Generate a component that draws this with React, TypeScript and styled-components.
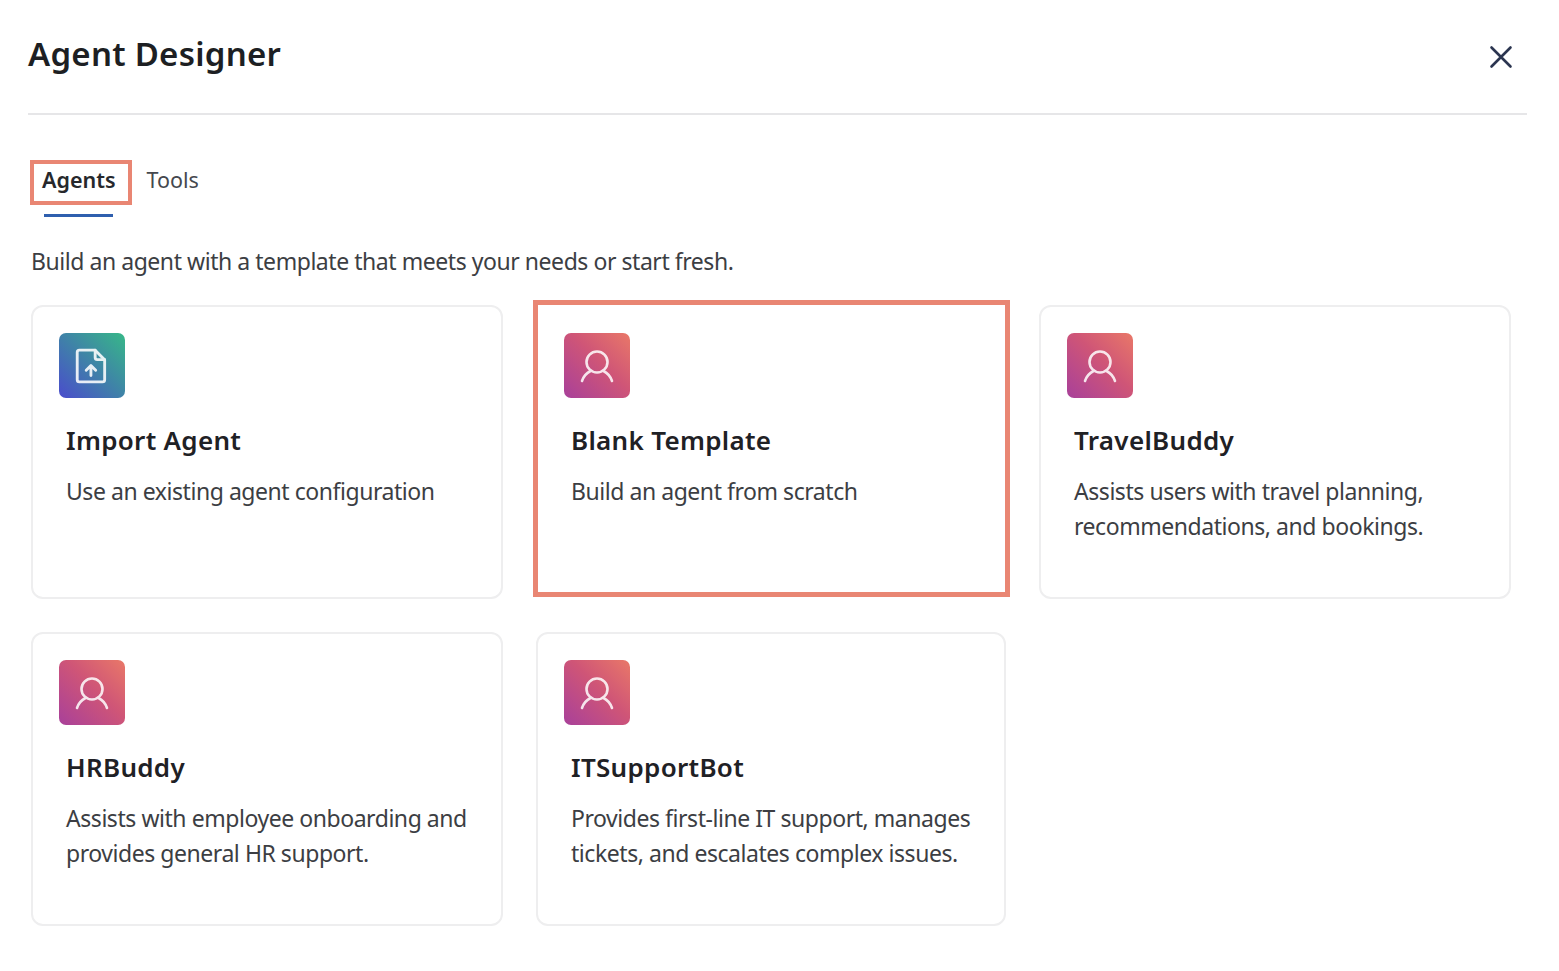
import React from 'react';
import styled, { createGlobalStyle } from 'styled-components';

const GlobalStyle = createGlobalStyle`
  html, body {
    margin: 0;
    padding: 0;
    background: #fff;
    font-family: 'Noto Sans', 'Open Sans', sans-serif;
  }
`;

const Page = styled.div`
  width: 1559px;
  height: 971px;
  overflow: hidden;
  box-sizing: border-box;
  padding: 0 32px 0 28px;
`;

const Header = styled.header`
  height: 115px;
  box-sizing: border-box;
  border-bottom: 2px solid #e6e6e8;
  display: flex;
  align-items: center;
  justify-content: space-between;
  padding: 0 12px 0 0;
`;

const Title = styled.h1`
  margin: 0 0 5px;
  font-size: 33px;
  line-height: 44px;
  letter-spacing: 0.25px;
  font-weight: 600;
  color: #1d1f23;
`;

const CloseButton = styled.button`
  display: flex;
  padding: 0;
  border: 0;
  background: none;
  color: #2b3550;
  cursor: pointer;
`;

const Tabs = styled.div`
  display: flex;
  gap: 31px;
  padding: 45px 0 0 14px;
`;

const Tab = styled.div<{ $active?: boolean }>`
  position: relative;
  height: 57px;
  font-size: 21.5px;
  line-height: 39px;
  font-weight: ${(p) => (p.$active ? 600 : 400)};
  color: ${(p) => (p.$active ? '#26282c' : '#45484e')};
  &::after {
    content: '';
    display: ${(p) => (p.$active ? 'block' : 'none')};
    position: absolute;
    left: 2px;
    right: 3px;
    bottom: 0;
    height: 3px;
    background: #2f5fae;
  }
`;

const TabMark = styled.span`
  position: absolute;
  top: 0;
  left: -12px;
  right: -16px;
  height: 45px;
  box-sizing: border-box;
  border: 4px solid #e98673;
`;

const Lead = styled.p`
  margin: 26px 0 0 3px;
  font-size: 23px;
  line-height: 36px;
  letter-spacing: -0.45px;
  color: #3c3e43;
`;

const Grid = styled.div`
  display: grid;
  grid-template-columns: 472px 470px 472px;
  grid-auto-rows: 294px;
  column-gap: 33px;
  row-gap: 33px;
  margin: 26px 0 0 3px;
`;

const Card = styled.div<{ $marked?: boolean }>`
  position: relative;
  box-sizing: border-box;
  border: 2px solid ${(p) => (p.$marked ? 'transparent' : '#eeeeef')};
  border-radius: 12px;
  padding: 26px 26px 0;
`;

const CardMark = styled.span`
  position: absolute;
  top: -7px;
  left: -5px;
  right: -6px;
  bottom: 0;
  box-sizing: border-box;
  border: 5px solid #e98673;
`;

const IconTile = styled.div<{ $kind: 'import' | 'agent' }>`
  width: 66px;
  height: 65px;
  border-radius: 7px;
  display: flex;
  align-items: center;
  justify-content: center;
  color: #fff;
  background: ${(p) =>
    p.$kind === 'import'
      ? 'linear-gradient(45deg, #4a4ccc 0%, #3f82a8 50%, #37b888 100%)'
      : 'linear-gradient(45deg, #a8409a 0%, #cf5577 55%, #e97868 100%)'};
`;

const CardBody = styled.div`
  padding: 0 0 0 7px;
`;

const CardTitle = styled.h2`
  margin: 24px 0 0;
  font-size: 26px;
  line-height: 36px;
  letter-spacing: 0.3px;
  font-weight: 600;
  color: #1f2125;
`;

const CardText = styled.p`
  margin: 16px 0 0;
  font-size: 23px;
  line-height: 34.5px;
  letter-spacing: -0.45px;
  color: #3c3e43;
`;

const ImportIcon = () => (
  <svg width="36" height="38" viewBox="0 0 34 36" fill="none" stroke="currentColor" strokeWidth="2.700" strokeLinejoin="round" strokeLinecap="round" opacity="0.88">
    <path d="M5 3h15l9 9v19a2 2 0 0 1-2 2H5a2 2 0 0 1-2-2V5a2 2 0 0 1 2-2z" />
    <path d="M20 3v7a2 2 0 0 0 2 2h7" />
    <path d="M16 27v-9M11.500 22l4.500-4.500 4.500 4.500" />
  </svg>
);

const PersonIcon = () => (
  <svg width="36" height="36" viewBox="0 0 36 36" fill="none" stroke="currentColor" strokeWidth="2.600" strokeLinecap="round" opacity="0.85">
    <circle cx="18" cy="14" r="10.500" />
    <path d="M3 33c1.500-4.500 4.500-8 8.500-10M33 33c-1.500-4.500-4.500-8-8.500-10" />
  </svg>
);

const CloseIcon = () => (
  <svg width="28" height="28" viewBox="0 0 28 28" fill="none" stroke="currentColor" strokeWidth="2.600" strokeLinecap="round">
    <path d="M4.500 4.500l19 19M23.500 4.500l-19 19" />
  </svg>
);

type Item = { title: string; text: string; kind: 'import' | 'agent'; marked?: boolean };

const items: Item[] = [
  { title: 'Import Agent', text: 'Use an existing agent configuration', kind: 'import' },
  { title: 'Blank Template', text: 'Build an agent from scratch', kind: 'agent', marked: true },
  { title: 'TravelBuddy', text: 'Assists users with travel planning, recommendations, and bookings.', kind: 'agent' },
  { title: 'HRBuddy', text: 'Assists with employee onboarding and provides general HR support.', kind: 'agent' },
  { title: 'ITSupportBot', text: 'Provides first-line IT support, manages tickets, and escalates complex issues.', kind: 'agent' },
];

export default function App() {
  return (
    <Page>
      <GlobalStyle />
      <Header>
        <Title>Agent Designer</Title>
        <CloseButton aria-label="Close">
          <CloseIcon />
        </CloseButton>
      </Header>
      <Tabs>
        <Tab $active>
          Agents
          <TabMark />
        </Tab>
        <Tab>Tools</Tab>
      </Tabs>
      <Lead>Build an agent with a template that meets your needs or start fresh.</Lead>
      <Grid>
        {items.map((item) => (
          <Card key={item.title} $marked={item.marked}>
            {item.marked && <CardMark />}
            <IconTile $kind={item.kind}>
              {item.kind === 'import' ? <ImportIcon /> : <PersonIcon />}
            </IconTile>
            <CardBody>
              <CardTitle>{item.title}</CardTitle>
              <CardText>{item.text}</CardText>
            </CardBody>
          </Card>
        ))}
      </Grid>
    </Page>
  );
}
